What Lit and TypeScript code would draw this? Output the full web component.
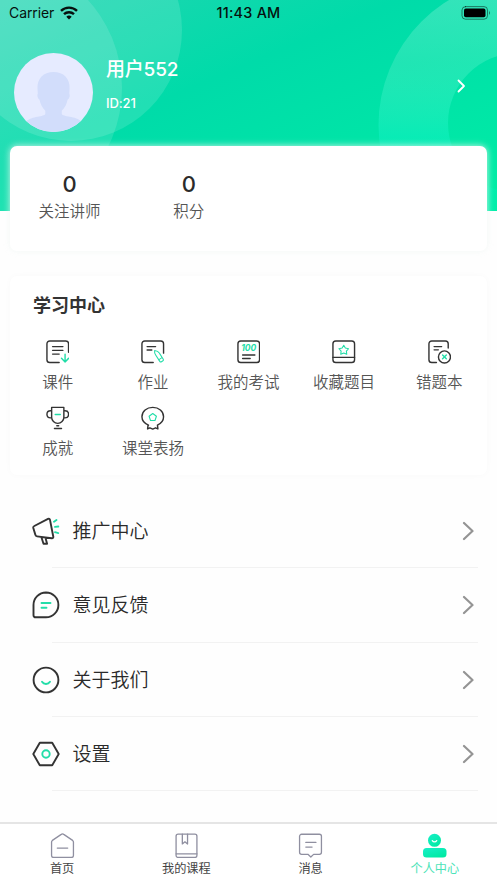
import { LitElement, html, css, svg } from "lit";
import { customElement } from "lit/decorators.js";

const icons: Record<string, unknown> = {
  courseware: svg`<path d="M24 13V4a3 3 0 0 0-3-3H4a3 3 0 0 0-3 3v17a3 3 0 0 0 3 3h10"/><path d="M7 7h11M7 11h11M7 15h7"/><g class="g"><path d="M20.3 15v8.5M16.5 19.500l3.800 4 3.700-4"/></g>`,
  homework: svg`<path d="M24 14V4a3 3 0 0 0-3-3H4a3 3 0 0 0-3 3v17a3 3 0 0 0 3 3h9"/><path d="M6.500 7h9M6.500 10.700h5"/><g class="g thin"><path d="M14.500 11.200c2.800.3 4.200 1.300 5.200 3l4 6.200c.4.7.2 1.200-.4 1.700l-1.500 1c-.7.4-1.300.3-1.800-.4L15.600 16c-1-1.500-1.400-3-1.100-4.800zM18.800 21.200l3.500-2.500"/></g>`,
  exam: svg`<rect x="1" y="1" width="23" height="23" rx="3"/><text class="hundred" x="12.500" y="12" text-anchor="middle">100</text><path d="M6 16h13M6 19.700h8"/>`,
  favorite: svg`<rect x="1" y="1" width="23" height="23" rx="3"/><path d="M1 18.500h23"/><g class="g thin"><path d="M12.500 5.600l1.700 3 3.400.7-2.300 2.500.4 3.400-3.200-1.400-3.200 1.400.4-3.400-2.300-2.500 3.400-.7z"/></g>`,
  wrong: svg`<path d="M21.500 8.500V4a3 3 0 0 0-3-3H4a3 3 0 0 0-3 3v17a3 3 0 0 0 3 3h5"/><path d="M6.500 7h8M6.500 10.500h4.500"/><circle cx="17.500" cy="18" r="6.400"/><g class="g"><path d="M15.500 16l4 4M19.500 16l-4 4"/></g>`,
  trophy: svg`<path d="M6 1.500h13v10.500a6.500 6.500 0 0 1-13 0zM6 5H4.800C2.500 5 1 6.700 1 8.800s1.500 3.800 3.800 3.800H6M19 5h1.200C22.500 5 24 6.700 24 8.800s-1.500 3.800-3.800 3.800H19M11.500 21h2M9 24h7.500"/><g class="g"><path d="M9.800 9h5.400"/></g>`,
  praise: svg`<path d="M8 20.400C3.800 18.700 1 15.400 1 11.500 1 5.700 6.100 1.500 12.500 1.500S24 5.700 24 11.500c0 3.900-2.800 7.200-6.500 8.900l.5 4-2.500-1.200-3 1.300-3-1.300L7 24.400l.5-4z"/><g class="g thin"><path d="M12.500 8l3.900 2.900-1.500 4.500h-4.800l-1.500-4.500z"/></g>`,
  promo: svg`<path d="M2.300 9L16 1.900c1-.5 1.800-.1 2 1l3.300 16.800c.2 1.100-.4 1.700-1.500 1.600L5.100 19.400c-.9-.1-1.500-.6-1.700-1.500L1.300 11c-.2-.9.100-1.600 1-2zM9.500 20.500l2 6.300h3.600l-1.600-5.800"/><g class="g"><path d="M22 4.700l2.500-1.700M23 9.900l3.300-.4M23 15.200l3.300.9"/></g>`,
  feedback: svg`<path d="M14 1.500a12.300 12.300 0 0 1 0 24.800H3.500a2 2 0 0 1-2-2V14A12.500 12.500 0 0 1 14 1.500z"/><g class="g"><path d="M9.500 12h9M9.500 16.700h5"/></g>`,
  about: svg`<circle cx="14" cy="14" r="12.400"/><g class="g"><path d="M10 15.800c1.900 2.900 6.100 2.900 8 0"/></g>`,
  settings: svg`<path d="M7.800 2.700h12.400L26.700 14l-6.500 11.300H7.800L1.300 14z"/><g class="g"><circle cx="14" cy="14" r="3.700"/></g>`,
  home: svg`<path d="M1.500 8.700v12.800a2 2 0 0 0 2 2h17a2 2 0 0 0 2-2V8.700c0-.7-.3-1.200-.8-1.600L13.200 1.300a2 2 0 0 0-2.400 0L2.300 7.100c-.5.400-.8.900-.8 1.600zM7 14.500h10"/>`,
  courses: svg`<rect x="2" y="1" width="20" height="22.500" rx="2"/><path d="M2 20h20M8 1v9.500l2.500-2 2.500 2V1"/>`,
  message: svg`<path d="M3.500 1.200h17a2 2 0 0 1 2 2v15.300a2 2 0 0 1-2 2h-5.500L12.300 23l-2.800-2.500h-6a2 2 0 0 1-2-2V3.200a2 2 0 0 1 2-2zM7.500 9h9.700M7.500 13.500h6"/>`,
};

const lessons = [
  ["courseware", "课件"],
  ["homework", "作业"],
  ["exam", "我的考试"],
  ["favorite", "收藏题目"],
  ["wrong", "错题本"],
  ["trophy", "成就"],
  ["praise", "课堂表扬"],
];
const menu = [
  ["promo", "推广中心"],
  ["feedback", "意见反馈"],
  ["about", "关于我们"],
  ["settings", "设置"],
];

@customElement("app-root")
export class AppRoot extends LitElement {
  static styles = css`
    :host {
      display: flex;
      flex-direction: column;
      position: relative;
      height: 883px;
      overflow: hidden;
      background: #fefefe;
      color: #333;
      font-family: Inter, "Noto Sans CJK SC", sans-serif;
    }
    * { box-sizing: border-box; }
    svg { display: block; fill: none; stroke-linecap: round; stroke-linejoin: round; }
    .backdrop { position: absolute; top: 0; left: 0; width: 100%; height: 211px;
      background: linear-gradient(157deg, #22d5b2 0%, #00dba9 40%, #00eea5 100%); }
    .status { position: relative; display: grid; grid-template-columns: 1fr auto 1fr; align-items: center;
      height: 26px; padding: 0 6px 0 9px; color: #06110e; font-size: 14px; line-height: 26px; }
    .carrier { display: flex; align-items: center; gap: 6px; letter-spacing: -.1px; }
    .wifi { stroke: #06110e; stroke-width: 2.400; stroke-linecap: butt; }
    .clock { margin-right: 3px; font-size: 14.400px; font-weight: 500; letter-spacing: .25px; }
    .battery { justify-self: end; }
    .profile { position: relative; display: flex; align-items: center; height: 119.500px; padding: 0 31.500px 0 13.500px; color: #fff; }
    .avatar { flex: none; margin-top: 13.500px; }
    .who { flex: 1; padding: 0 0 2px 13.500px; }
    .name { font-size: 19px; font-weight: 500; line-height: 26px; letter-spacing: -.2px; }
    .id { margin-top: 11px; font-size: 13px; font-weight: 500; line-height: 18px; letter-spacing: -.1px; }
    .card { position: relative; flex: none; margin: 0 10px; background: #fff; border-radius: 7px; }
    .stats { display: grid; grid-template-columns: repeat(4, 1fr); height: 105.500px; padding-top: 26.500px;
      text-align: center; box-shadow: 0 0 7px rgba(245, 250, 248, .85), 0 0 6px rgba(0, 0, 0, .018); }
    .num { font-size: 22px; font-weight: 500; line-height: 24px; color: #2b2b2b; }
    .label { font-size: 15.500px; font-weight: 350; line-height: 24px; color: #555; white-space: nowrap; }
    .stats .label { margin-top: 4px; }
    .learn { height: 199px; margin-top: 25px; padding-top: 17px; box-shadow: 0 0 7px rgba(0, 0, 0, .025); }
    .title { padding-left: 23px; font-size: 18px; font-weight: 700; line-height: 26px; }
    .grid { display: grid; grid-template-columns: repeat(5, 1fr); grid-auto-rows: 66px; padding-top: 21px; }
    .cell { display: flex; flex-direction: column; align-items: center; gap: 7px; }
    .ico { stroke: #333; stroke-width: 1.500; }
    .g { stroke: #22dda8; }
    .thin { stroke-width: 1.150; }
    .hundred { fill: #22dda8; stroke: none; font: italic 700 9px Inter, sans-serif; }
    .menu { flex: none; margin-top: 19px; padding: 0 19px 0 32px; }
    .row { display: flex; align-items: center; height: 74.300px; position: relative; }
    .row .ico { stroke-width: 1.900; }
    .row::after { content: ""; position: absolute; left: 20px; right: 0; bottom: 0; height: 1px; background: #f2f2f2; }
    .text { flex: 1; padding: 2px 0 0 12.500px; font-size: 19px; font-weight: 350; line-height: 28px; color: #2a2a2a; }
    .arrow { margin-right: 4px; stroke: #949494; stroke-width: 2.200; }
    .tabs { position: relative; display: grid; grid-template-columns: repeat(4, 1fr); flex: none; height: 61px;
      margin-top: auto; padding-top: 8.500px; border-top: 2px solid #e5e5e5; background: #fff; }
    .tab { display: flex; flex-direction: column; align-items: center; gap: 3.500px; font-size: 12.200px; line-height: 16px; color: #444; }
    .line { stroke: #8f8fa0; stroke-width: 1.250; }
    .on { color: #4be3b8; }
  `;

  private icon(name: string, size = 23.5, box = 25, cls = "ico") {
    return html`<svg class=${cls} width=${size} height=${size} viewBox="0 0 ${box} ${box}">${icons[name]}</svg>`;
  }

  private tab(name: string, label: string) {
    return html`<div class="tab">${this.icon(name, 25, 24, "line")}<span>${label}</span></div>`;
  }

  render() {
    return html`
      <div class="backdrop">
        <svg width="497" height="211">
          <defs>
            <linearGradient id="ring" gradientUnits="userSpaceOnUse" x1="0" y1="0" x2="0" y2="211">
              <stop offset="0" stop-color="#e8fff8" stop-opacity=".22" />
              <stop offset=".3" stop-color="#c0fff0" stop-opacity=".17" />
              <stop offset=".65" stop-color="#20fbdc" stop-opacity=".28" />
              <stop offset="1" stop-color="#00f4d0" stop-opacity=".1" />
            </linearGradient>
          </defs>
          <circle cx="-9" cy="88" r="131" fill="#fff" fill-opacity=".12" />
          <circle cx="71" cy="30" r="111" fill="#fff" fill-opacity=".13" />
          <path fill="url(#ring)" fill-rule="evenodd"
            d="M378.500 125a146 146 0 1 0 292 0a146 146 0 1 0-292 0zM448 123a70 70 0 1 0 140 0a70 70 0 1 0-140 0z" />
        </svg>
      </div>
      <div class="status">
        <div class="carrier">Carrier
          <svg class="wifi" width="18" height="14" viewBox="0 0 18 14">
            <path d="M1 4.900a11.500 11.500 0 0 1 16 0M4 8.200a7.200 7.200 0 0 1 10 0" />
            <path d="M6.300 10.700a4 4 0 0 1 5.400 0L9 13.400z" fill="#06110e" stroke="none" />
          </svg>
        </div>
        <div class="clock">11:43 AM</div>
        <svg class="battery" width="30" height="14" viewBox="0 0 30 14">
          <rect x="1" y=".6" width="25.500" height="12.600" rx="3.500" stroke="#06110e" stroke-opacity=".5" />
          <rect x="3" y="2.600" width="21.500" height="8.600" rx="1.800" fill="#000" />
          <path d="M28 4.800q1.800 2.100 0 4.200z" fill="#06110e" fill-opacity=".6" />
        </svg>
      </div>
      <div class="profile">
        <svg class="avatar" width="79" height="79" viewBox="0 0 79 79">
          <defs><clipPath id="face"><circle cx="39.500" cy="39.500" r="39.500" /></clipPath></defs>
          <g clip-path="url(#face)">
            <rect width="79" height="79" fill="#e6ebff" />
            <path fill="#d2ddfb" d="M39.500 19c-10 0-16.500 6.500-16 16.500l.3 5c-1 1.500-.2 5 1.700 6.200 1 4.600 3 8.300 5.800 11V61c-1 3-13 1.500-20 8v10h57V69c-7-6.500-19.500-5-20.500-8v-3.300c2.800-2.700 4.900-6.400 5.800-11 2-1.200 2.700-4.700 1.700-6.200l.3-5c.5-10-6-16.500-16.100-16.500z" />
          </g>
        </svg>
        <div class="who"><div class="name">用户552</div><div class="id">ID:21</div></div>
        <svg width="9" height="14" viewBox="0 0 9 14" stroke="#fff" stroke-width="1.800"><path d="M1.500 1.500l5.500 5.500L1.500 12.500" /></svg>
      </div>
      <div class="card stats">
        <div><div class="num">0</div><div class="label">关注讲师</div></div>
        <div><div class="num">0</div><div class="label">积分</div></div>
      </div>
      <div class="card learn">
        <div class="title">学习中心</div>
        <div class="grid">
          ${lessons.map(([i, t]) => html`<div class="cell">${this.icon(i)}<span class="label">${t}</span></div>`)}
        </div>
      </div>
      <div class="menu">
        ${menu.map(([i, t]) => html`<div class="row">
          ${this.icon(i, 28, 28)}
          <span class="text">${t}</span>
          <svg class="arrow" width="12" height="20" viewBox="0 0 12 20"><path d="M2 2l8.500 8L2 18" /></svg>
        </div>`)}
      </div>
      <div class="tabs">
        ${this.tab("home", "首页")}${this.tab("courses", "我的课程")}${this.tab("message", "消息")}
        <div class="tab on">
          <svg width="25" height="25" viewBox="0 0 25 25">
            <defs><linearGradient id="me" x1="0" y1="0" x2=".7" y2="1">
              <stop stop-color="#18efc8" /><stop offset="1" stop-color="#00eaa3" />
            </linearGradient></defs>
            <circle cx="12.500" cy="7.300" r="6.500" fill="url(#me)" />
            <rect x="1" y="15" width="23.500" height="9.500" rx="3.500" fill="url(#me)" />
            <path d="M10.300 7.600c1 1.700 3.400 1.700 4.400 0" stroke="#fff" stroke-width="1.200" />
          </svg>
          <span>个人中心</span>
        </div>
      </div>
    `;
  }
}
